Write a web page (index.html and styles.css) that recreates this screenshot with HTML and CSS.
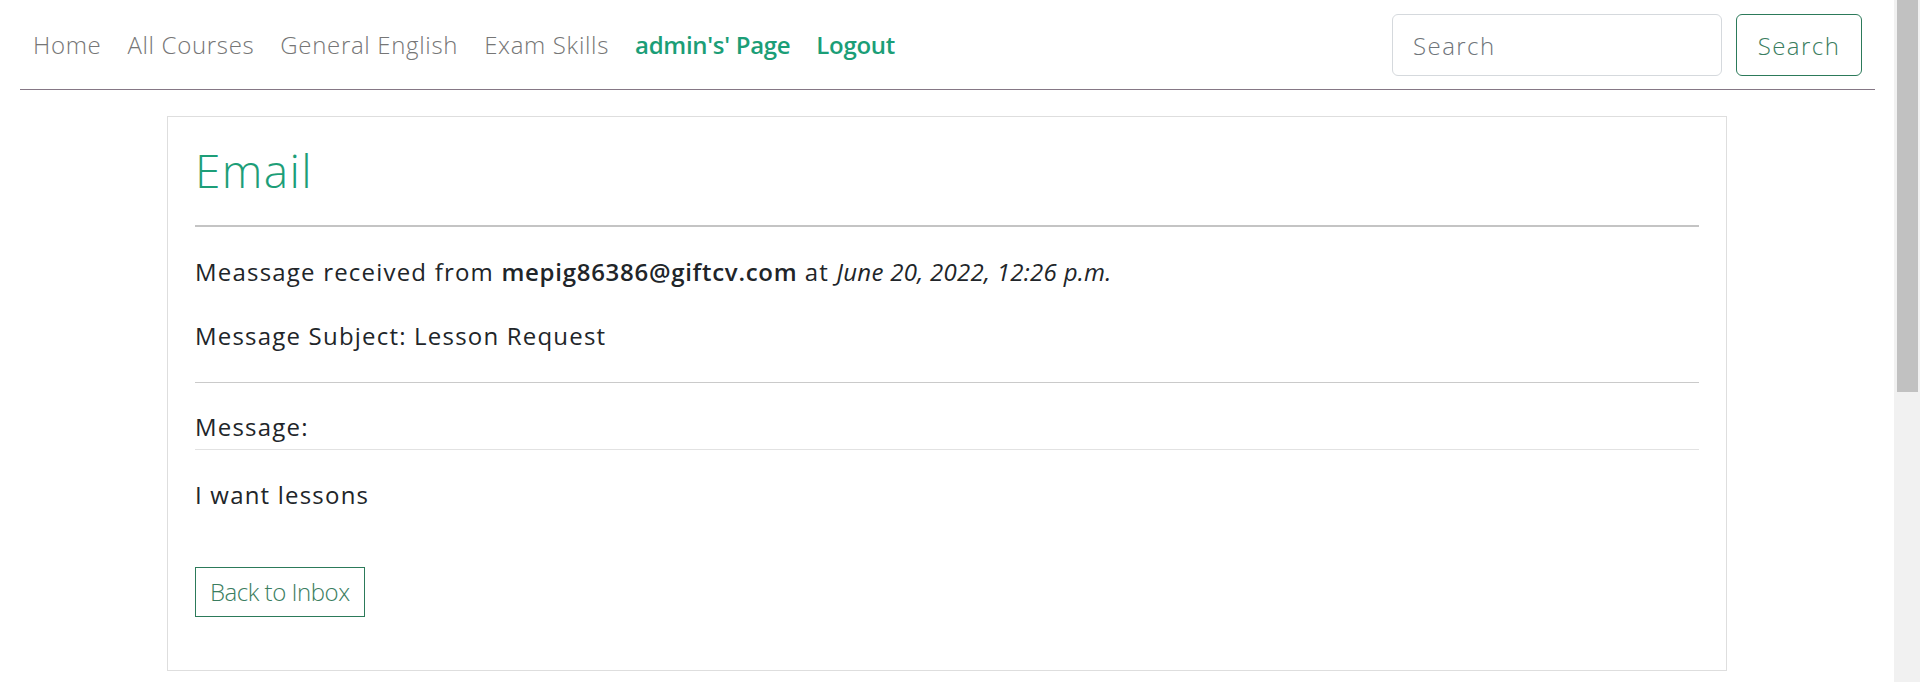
FILE: index.html
```html
<!DOCTYPE html>
<html lang="en">
<head>
<meta charset="utf-8">
<title>Email</title>
<link rel="stylesheet" href="styles.css">
</head>
<body>
<div class="viewport">
  <div class="page">
    <nav class="navbar">
      <ul class="nav-links">
        <li><a class="nav-link" href="#">Home</a></li>
        <li><a class="nav-link" href="#">All Courses</a></li>
        <li><a class="nav-link" href="#">General English</a></li>
        <li><a class="nav-link" href="#">Exam Skills</a></li>
        <li><a class="nav-link active" href="#">admin's' Page</a></li>
        <li><a class="nav-link active" href="#">Logout</a></li>
      </ul>
      <form class="search-form">
        <input class="search-input" type="search" placeholder="Search">
        <button class="search-btn" type="button">Search</button>
      </form>
    </nav>
    <main class="card">
      <h2 class="card-title">Email</h2>
      <hr class="rule rule-strong">
      <p class="line">Meassage received from <strong class="sender">mepig86386@giftcv.com</strong> at <em class="date">June 20, 2022, 12:26 p.m.</em></p>
      <p class="line subject">Message Subject: Lesson Request</p>
      <hr class="rule">
      <div class="msg-label">Message:</div>
      <p class="line body-text">I want lessons</p>
      <a class="back-btn" href="#">Back to Inbox</a>
    </main>
  </div>
  <div class="scrollbar"><div class="thumb"></div></div>
</div>
</body>
</html>
```
FILE: styles.css
```css
* { box-sizing: border-box; }
html, body { margin: 0; padding: 0; height: 100%; overflow: hidden; }
body {
  font-family: "Open Sans", "Liberation Sans", sans-serif;
  font-size: 24px;
  color: #212529;
  background: #fff;
}
.viewport { display: flex; height: 682px; }
.page { flex: 1; min-width: 0; }
.scrollbar { width: 26px; background: #f1f1f1; padding-left: 3px; }
.thumb { height: 392px; width: 21px; background: #c1c1c1; }

.navbar {
  margin: 0 19px 0 20px;
  padding: 14px 13px 13px 13px;
  display: flex;
  align-items: center;
  justify-content: space-between;
  border-bottom: 1.5px solid #857785;
}
.nav-links { list-style: none; margin: 0; padding: 0; display: flex; gap: 26px; }
.nav-link {
  text-decoration: none;
  color: #767676;
  font-weight: 300;
  letter-spacing: 0.028em;
  line-height: 36px;
}
.nav-link.active { color: #1b9e77; font-weight: 600; letter-spacing: -0.012em; }
.search-form { display: flex; gap: 14px; }
.search-input {
  width: 330px; height: 62px;
  border: 1px solid #d5d9dd; border-radius: 6px;
  padding: 0 20px;
  font: inherit; font-weight: 300; color: #212529;
  letter-spacing: 0.06em;
}
.search-input::placeholder { color: #6f757a; }
.search-btn {
  width: 126px; height: 62px;
  border: 1.5px solid #2c7a5a; border-radius: 6px;
  background: #fff; color: #3a7d60;
  font: inherit; font-weight: 300;
  letter-spacing: 0.06em;
  padding: 0;
}

.card {
  display: flex; flex-direction: column; align-items: flex-start;
  width: 1560px;
  margin: 26px auto 0;
  border: 1px solid #dedede;
  padding: 26px 27px 53px;
}
.card-title {
  margin: 0;
  font-size: 46px; line-height: 54px; font-weight: 300;
  letter-spacing: 0.03em;
  color: #1d9e78;
}
.rule { align-self: stretch; margin: 0; border: 0; border-top: 1px solid #cacaca; }
.rule-strong { border-top: 2px solid #c4c4c4; margin-top: 28px; }
.line { margin: 27px 0 0; line-height: 36px; letter-spacing: 0.05em; }
.sender { font-weight: 600; letter-spacing: 0.03em; }
.date { letter-spacing: 0.012em; }
.subject { margin: 28px 0 28px; }
.msg-label {
  align-self: stretch;
  margin-top: 26px;
  line-height: 36px;
  letter-spacing: 0.05em;
  padding-bottom: 4px;
  border-bottom: 1px solid #e2e2e2;
}
.body-text { margin-top: 27px; }
.back-btn {
  margin-top: 54px;
  display: inline-block;
  border: 1px solid #2c7a5a;
  color: #3a7d60;
  text-decoration: none;
  font-weight: 300;
  line-height: 36px;
  padding: 6px 14px;
  letter-spacing: -0.02em;
}
```
